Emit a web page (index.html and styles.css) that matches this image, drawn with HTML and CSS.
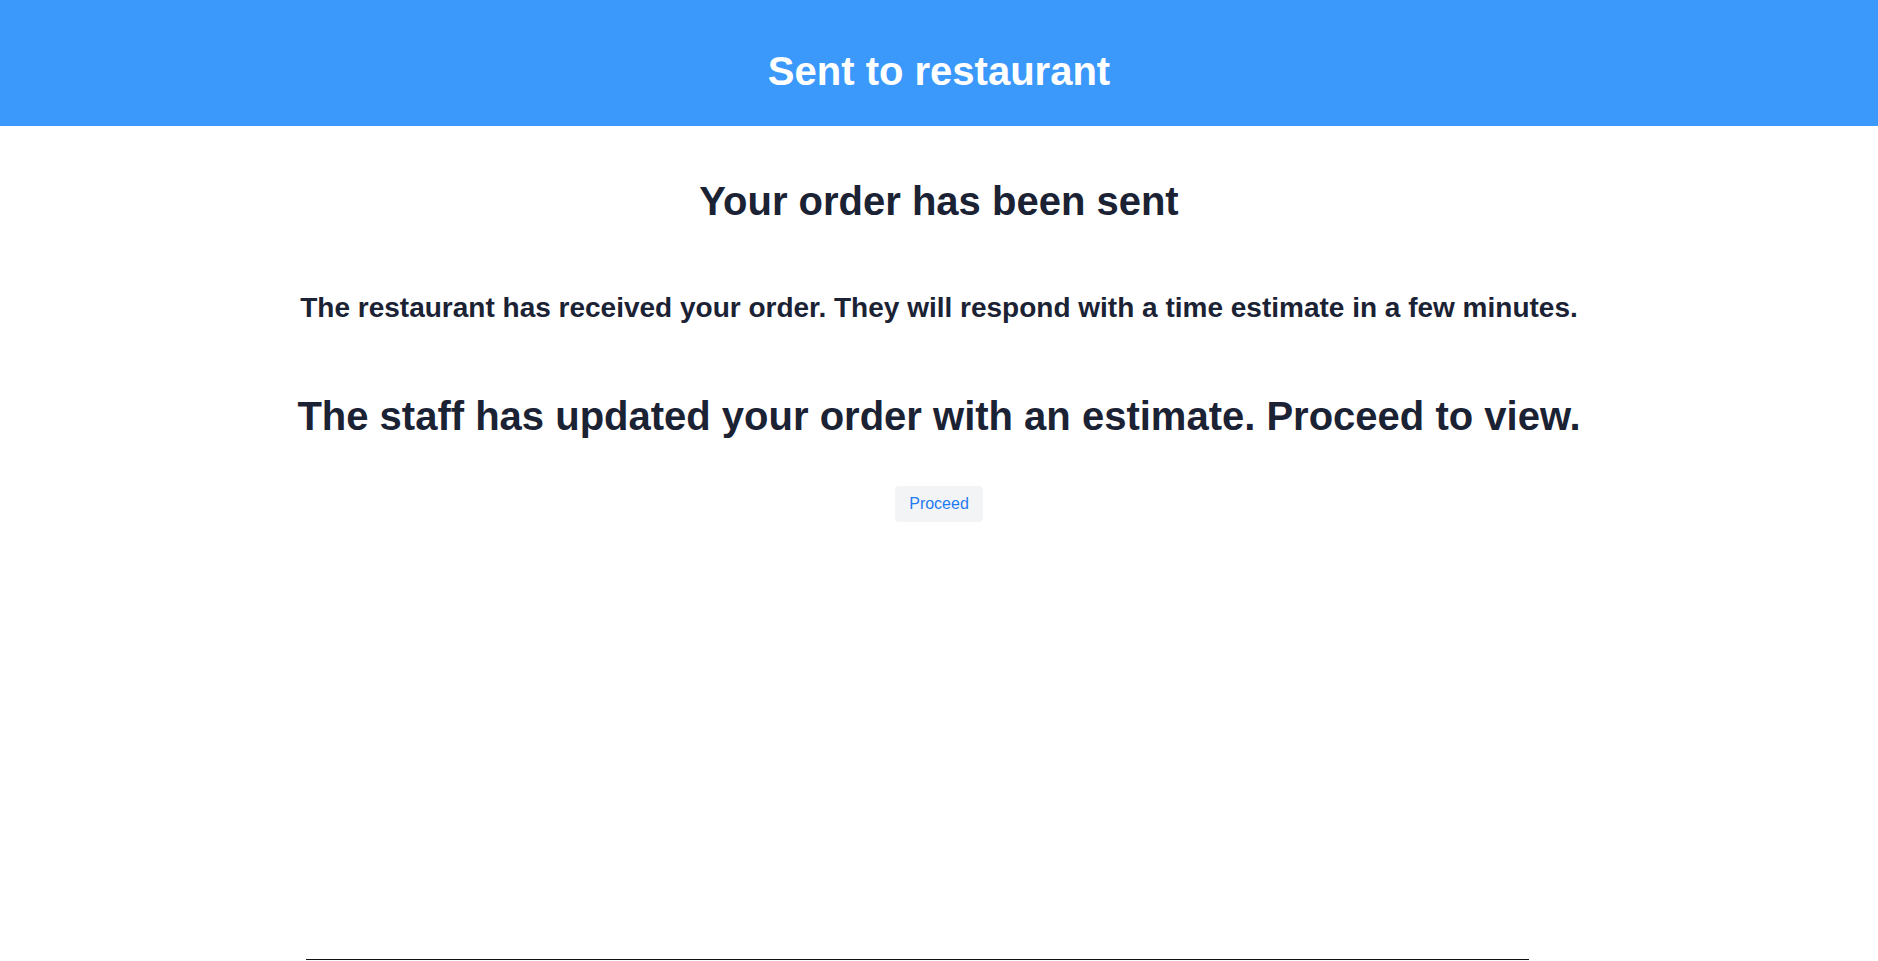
FILE: index.html
```html
<!DOCTYPE html>
<html lang="en">
<head>
<meta charset="utf-8">
<title>Sent to restaurant</title>
<link rel="stylesheet" href="styles.css">
</head>
<body>
<header class="topbar">
  <h1 class="topbar-title">Sent to restaurant</h1>
</header>
<main class="content">
  <h2 class="headline">Your order has been sent</h2>
  <p class="subline">The restaurant has received your order. They will respond with a time estimate in a few minutes.</p>
  <h2 class="update">The staff has updated your order with an estimate. Proceed to view.</h2>
  <button class="proceed" type="button">Proceed</button>
</main>
<div class="footer-rule"></div>
</body>
</html>
```

FILE: styles.css
```css
* { box-sizing: border-box; }
html, body { margin: 0; padding: 0; }
body {
  font-family: "Liberation Sans", Arial, sans-serif;
  color: #1a2234;
  background: #ffffff;
  overflow: hidden;
}
.topbar {
  background: #3b99fc;
  height: 126px;
  padding-top: 48px;
  text-align: center;
}
.topbar-title {
  margin: 0;
  font-size: 40px;
  line-height: 46px;
  font-weight: 700;
  color: #ffffff;
}
.content {
  text-align: center;
  display: flex;
  flex-direction: column;
  align-items: center;
}
.headline {
  margin: 52px 0 0;
  font-size: 40px;
  line-height: 46px;
  font-weight: 700;
}
.subline {
  margin: 68px 0 0;
  font-size: 28px;
  line-height: 32px;
  font-weight: 700;
}
.update {
  margin: 69px 0 0;
  font-size: 40px;
  line-height: 46px;
  font-weight: 700;
}
.proceed {
  margin-top: 47px;
  height: 36px;
  width: 88px;
  padding: 0;
  border: none;
  border-radius: 4px;
  background: #f3f4f6;
  color: #1f7bf2;
  font-family: "Liberation Sans", Arial, sans-serif;
  font-size: 16px;
  cursor: pointer;
}
.footer-rule {
  margin: 437px 0 0 306px;
  width: 1223px;
  height: 1px;
  background: #111111;
}
```
